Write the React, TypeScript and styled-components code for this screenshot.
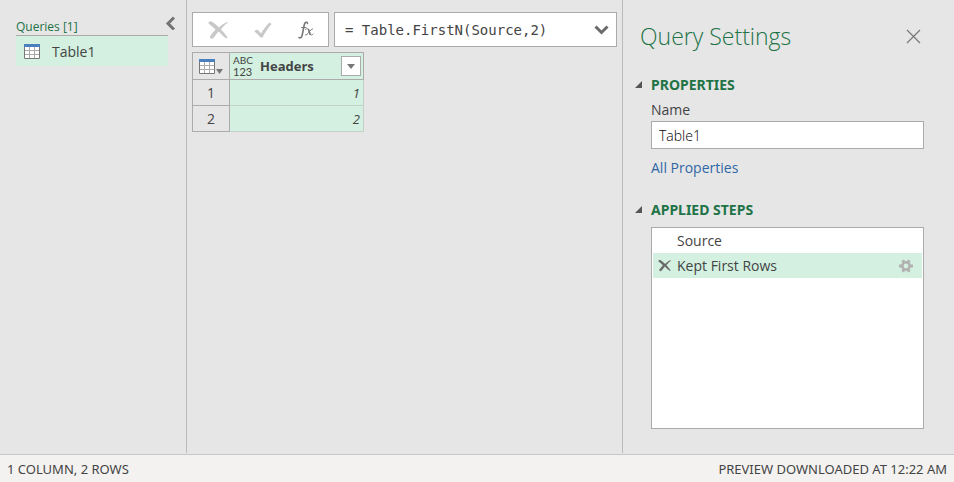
import React, { useState } from "react";
import styled, { createGlobalStyle } from "styled-components";

const GlobalStyle = createGlobalStyle`
  *, *::before, *::after { box-sizing: border-box; }
  body { margin: 0; background: #e6e6e6; }
  body, button, input { font-family: "Open Sans", "Noto Sans", sans-serif; color: #444; }
  button { padding: 0; border: 0; background: none; cursor: pointer; }
  svg { display: block; flex: none; }
`;

const Page = styled.div`
  display: flex;
  flex-direction: column;
  min-height: 100vh;
  font-size: 14px;
  line-height: 20px;
`;

const Workspace = styled.div`
  flex: 1;
  display: grid;
  grid-template-columns: 187px minmax(0, 1fr) 332px;
  padding-bottom: 1px;
`;

const QueriesPane = styled.aside`
  border-right: 1px solid #bababa;
  padding: 16px 10px 0 16px;
`;

const QueriesHeader = styled.div`
  display: flex;
  justify-content: space-between;
  height: 19px;
`;

const QueriesTitle = styled.h2`
  margin: 0;
  font-size: 12px;
  font-weight: 400;
  line-height: 21px;
  color: #217346;
`;

const CollapseButton = styled.button`
  align-self: flex-start;
`;

const QueryList = styled.ul`
  list-style: none;
  margin: 0 8px 0 0;
  padding: 0;
  border-top: 1px solid #ababab;
`;

const QueryItem = styled.button`
  display: flex;
  align-items: center;
  gap: 11px;
  width: 100%;
  height: 30px;
  padding-left: 8px;
  background: #d3f0e0;
  font-size: 14px;
`;

const Editor = styled.main`
  padding: 12px 5px 0;
`;

const FormulaBar = styled.div`
  display: flex;
  gap: 5px;
  height: 35px;
  margin-bottom: 5px;
`;

const FormulaActions = styled.div`
  display: flex;
  align-items: center;
  justify-content: space-between;
  width: 137px;
  padding: 0 14px 0 15px;
  border: 1px solid #ababab;
  background: #fff;
`;

const FormulaField = styled.div`
  flex: 1;
  display: flex;
  align-items: center;
  padding-right: 7px;
  border: 1px solid #ababab;
  background: #fff;
`;

const FormulaInput = styled.input`
  flex: 1;
  min-width: 0;
  height: 100%;
  padding: 0 0 0 10px;
  border: 0;
  outline: 0;
  background: none;
  font-family: "DejaVu Sans Mono", monospace;
  font-size: 14px;
`;

const Grid = styled.table`
  border-collapse: separate;
  border-spacing: 0;
  table-layout: fixed;
  width: 172px;
  border-top: 1px solid #ababab;
  border-left: 1px solid #ababab;
`;

const CornerCell = styled.th`
  width: 37px;
  height: 27px;
  padding: 0 0 0 6px;
  border-right: 1px solid #ababab;
  border-bottom: 1px solid #ababab;
`;

const CornerButton = styled.button`
  display: flex;
  align-items: flex-end;
`;

const ColumnHeader = styled.th`
  padding: 0 2px 0 3px;
  background: #d3f0e0;
  border-right: 1px solid #ababab;
  border-bottom: 1px solid #ababab;
`;

const HeaderContent = styled.div`
  display: flex;
  align-items: center;
  height: 26px;
`;

const TypeBadge = styled.span`
  display: flex;
  flex-direction: column;
  width: 27px;
  text-align: left;
`;

const TypeLine = styled.span<{ $size: number }>`
  font-family: Lato, sans-serif;
  font-size: ${(p) => p.$size}px;
  font-weight: 400;
  line-height: 11px;
`;

const ColumnName = styled.span`
  flex: 1;
  font-size: 13px;
  font-weight: 700;
  text-align: left;
`;

const FilterButton = styled.button`
  display: flex;
  align-items: center;
  justify-content: center;
  width: 20px;
  height: 20px;
  border: 1px solid #ababab;
  background: #fff;
`;

const RowNumber = styled.th`
  height: 26px;
  padding: 0;
  font-weight: 400;
  border-right: 1px solid #ababab;
  border-bottom: 1px solid #ababab;
`;

const ValueCell = styled.td`
  padding: 0 3px 0 0;
  background: #d3f0e0;
  border-right: 1px solid #c6d0ca;
  border-bottom: 1px solid #c6d0ca;
  font-size: 13px;
  font-style: italic;
  text-align: right;
`;

const SettingsPane = styled.aside`
  display: flex;
  flex-direction: column;
  padding: 17px 30px 24px 12px;
  border-left: 1px solid #bababa;
`;

const SettingsHeader = styled.header`
  display: flex;
  align-items: center;
  justify-content: space-between;
  padding: 0 3px 0 5px;
  margin-bottom: 19px;
`;

const SettingsTitle = styled.h1`
  margin: 0;
  font-size: 23px;
  font-weight: 300;
  line-height: 38px;
  color: #217346;
`;

const SectionToggle = styled.button`
  display: flex;
  align-items: center;
  gap: 9px;
  height: 20px;
  font-family: "Noto Sans", sans-serif;
  font-size: 14px;
  font-weight: 700;
  color: #217346;
`;

const SectionTitle = styled.h2`
  margin: 0;
  font-size: inherit;
`;

const PropertiesBody = styled.div`
  display: flex;
  flex-direction: column;
  align-items: flex-start;
  padding: 6px 0 0 16px;
  margin-bottom: 21px;
`;

const NameInput = styled.input`
  width: 100%;
  height: 28px;
  margin: 1px 0 9px;
  padding: 0 7px;
  border: 1px solid #ababab;
  border-radius: 0;
  background: #fff;
  font-size: 14px;
  font-weight: 300;
  color: #000;
`;

const PropertiesLink = styled.a`
  color: #2f67a5;
  text-decoration: none;
`;

const StepList = styled.ol`
  flex: 1;
  list-style: none;
  margin: 8px 0 0 16px;
  padding: 0 1px;
  border: 1px solid #ababab;
  background: #fff;
`;

const Step = styled.li<{ $selected?: boolean }>`
  display: grid;
  grid-template-columns: 19px 1fr 14px;
  align-items: center;
  height: 25px;
  padding: 0 9px 0 5px;
  background: ${(p) => (p.$selected ? "#d3f0e0" : "transparent")};
`;

const StepName = styled.span`
  grid-column: 2;
`;

const StatusBar = styled.footer`
  display: flex;
  align-items: center;
  justify-content: space-between;
  height: 28px;
  padding: 0 7px;
  border-top: 1px solid #c6c6c6;
  background: #f3f2f1;
  font-family: "Noto Sans", sans-serif;
  font-size: 13px;
`;

const TableIcon = () => (
  <svg width="17" height="15" viewBox="0 0 17 15" aria-hidden="true">
    <path fill="#fff" d="M0 0h16v15H0z" />
    <path fill="none" stroke="#aaa" d="M5.5 3v11M10.5 3v11M1 6.5h14M1 10.5h14" />
    <path fill="none" stroke="#777" d="M.5 2v12.5h15V2" />
    <path fill="#4a80bd" d="M0 0h16v3H0z" />
  </svg>
);

const DownTriangle = ({ width = 8 }: { width?: number }) => (
  <svg width={width} height="5" viewBox="0 0 8 5" preserveAspectRatio="none" aria-hidden="true">
    <path fill="#777" d="M0 0h8L4 5z" />
  </svg>
);

const CrossIcon = ({ size, color }: { size: number; color: string }) => (
  <svg width={size} height={size} viewBox="0 0 20 20" aria-hidden="true">
    <path
      fill={color}
      d="M.5 3.500C.5 2 2 1 3.500 1.500 7 3.500 9 5.500 11 7.500c2.500-2.500 5-4.500 8.500-5.500l.5.500c-3 2-5 4-7 7 2.500 2.500 4.500 5 6.500 8l-1 1c-3-2-5.500-4.500-8-7C8.500 14 7 16 5.500 18 4 19.500 1.500 18.500 2 16.500 3.500 14 5.500 12 7.500 9.500 5.500 7.500 3 5.500.5 3.500z"
    />
  </svg>
);

const CheckIcon = () => (
  <svg width="18" height="18" viewBox="0 0 18 18" aria-hidden="true">
    <path fill="#c8c8c8" d="M.5 10.500c.5-1.500 2-2.300 3.500-1.500l3 3.500C9.500 8 12 5 15.500 1.500L17.500 3C14 7 11 11.500 8.500 16.500H6.500C4.500 14 3 12.500.5 10.500z" />
  </svg>
);

const FunctionIcon = () => (
  <svg width="16" height="20" viewBox="0 0 16 20" fill="none" stroke="#777" strokeLinecap="round" aria-hidden="true">
    <path strokeWidth="1.600" d="M9.500 3.500C9.300 1.500 6.800 1.800 6.200 5L4.200 15c-.6 2.800-2 3.500-3.200 2.500" />
    <path strokeWidth="1" d="M3.500 7.500h4.500M7.500 9.500c2-2 3-.8 3.700 1.500l.8 2.500c.6 2 2 2 3 .5M7.500 15c2.500.5 4.500-6 7-6" />
    <path strokeWidth="1.600" d="M10.500 9.500l1.500 4.800" />
  </svg>
);

const GearIcon = () => (
  <svg width="14" height="14" viewBox="0 0 14 14" aria-hidden="true">
    <g fill="none" stroke="#b1b1b1">
      <circle cx="7" cy="7" r="3.700" strokeWidth="2.600" />
      <path strokeWidth="3" d="M4.700 3L3.700 1.200M9.300 3L10.300 1.200M11.500 7H14M9.300 11l1 1.800M4.700 11l-1 1.800M2.500 7H0" />
    </g>
  </svg>
);

const SectionArrow = () => (
  <svg width="7" height="7" viewBox="0 0 7 7" aria-hidden="true">
    <path fill="#555" d="M7 0v7H0z" />
  </svg>
);

const rows = [1, 2];

export default function App() {
  const [formula, setFormula] = useState("= Table.FirstN(Source,2)");
  const [name, setName] = useState("Table1");

  return (
    <>
      <GlobalStyle />
      <Page>
        <Workspace>
          <QueriesPane>
            <QueriesHeader>
              <QueriesTitle>Queries [1]</QueriesTitle>
              <CollapseButton aria-label="Collapse queries">
                <svg width="11" height="14" viewBox="0 0 11 14" aria-hidden="true">
                  <path fill="none" stroke="#737373" strokeWidth="3" d="M9 1.500L3 7.500l6 6" />
                </svg>
              </CollapseButton>
            </QueriesHeader>
            <QueryList>
              <li>
                <QueryItem>
                  <TableIcon />
                  Table1
                </QueryItem>
              </li>
            </QueryList>
          </QueriesPane>

          <Editor>
            <FormulaBar>
              <FormulaActions>
                <button aria-label="Cancel"><CrossIcon size={20} color="#c8c8c8" /></button>
                <button aria-label="Enter"><CheckIcon /></button>
                <button aria-label="Insert step"><FunctionIcon /></button>
              </FormulaActions>
              <FormulaField>
                <FormulaInput aria-label="Formula" value={formula} onChange={(e) => setFormula(e.target.value)} />
                <button aria-label="Expand formula bar">
                  <svg width="15" height="11" viewBox="0 0 15 11" aria-hidden="true">
                    <path fill="none" stroke="#6a6a6a" strokeWidth="3" d="M1.500 2.500l6 6 6-6" />
                  </svg>
                </button>
              </FormulaField>
            </FormulaBar>
            <Grid>
              <thead>
                <tr>
                  <CornerCell>
                    <CornerButton aria-label="Table options">
                      <TableIcon />
                      <DownTriangle width={7} />
                    </CornerButton>
                  </CornerCell>
                  <ColumnHeader scope="col">
                    <HeaderContent>
                      <TypeBadge>
                        <TypeLine $size={10}>ABC</TypeLine>
                        <TypeLine $size={11}>123</TypeLine>
                      </TypeBadge>
                      <ColumnName>Headers</ColumnName>
                      <FilterButton aria-label="Filter Headers"><DownTriangle /></FilterButton>
                    </HeaderContent>
                  </ColumnHeader>
                </tr>
              </thead>
              <tbody>
                {rows.map((value, i) => (
                  <tr key={value}>
                    <RowNumber scope="row">{i + 1}</RowNumber>
                    <ValueCell>{value}</ValueCell>
                  </tr>
                ))}
              </tbody>
            </Grid>
          </Editor>

          <SettingsPane>
            <SettingsHeader>
              <SettingsTitle>Query Settings</SettingsTitle>
              <button aria-label="Close query settings">
                <svg width="15" height="15" viewBox="0 0 15 15" aria-hidden="true">
                  <path fill="none" stroke="#777" strokeWidth="1.200" d="M1 1l13 13M14 1L1 14" />
                </svg>
              </button>
            </SettingsHeader>
            <SectionToggle aria-expanded="true">
              <SectionArrow />
              <SectionTitle>PROPERTIES</SectionTitle>
            </SectionToggle>
            <PropertiesBody>
              <label htmlFor="query-name">Name</label>
              <NameInput id="query-name" value={name} onChange={(e) => setName(e.target.value)} />
              <PropertiesLink href="#properties">All Properties</PropertiesLink>
            </PropertiesBody>
            <SectionToggle aria-expanded="true">
              <SectionArrow />
              <SectionTitle>APPLIED STEPS</SectionTitle>
            </SectionToggle>
            <StepList>
              <Step>
                <StepName>Source</StepName>
              </Step>
              <Step $selected>
                <button aria-label="Delete step"><CrossIcon size={13} color="#6a6a6a" /></button>
                <StepName>Kept First Rows</StepName>
                <button aria-label="Edit step settings"><GearIcon /></button>
              </Step>
            </StepList>
          </SettingsPane>
        </Workspace>
        <StatusBar>
          <span>1 COLUMN, 2 ROWS</span>
          <span>PREVIEW DOWNLOADED AT 12:22 AM</span>
        </StatusBar>
      </Page>
    </>
  );
}
